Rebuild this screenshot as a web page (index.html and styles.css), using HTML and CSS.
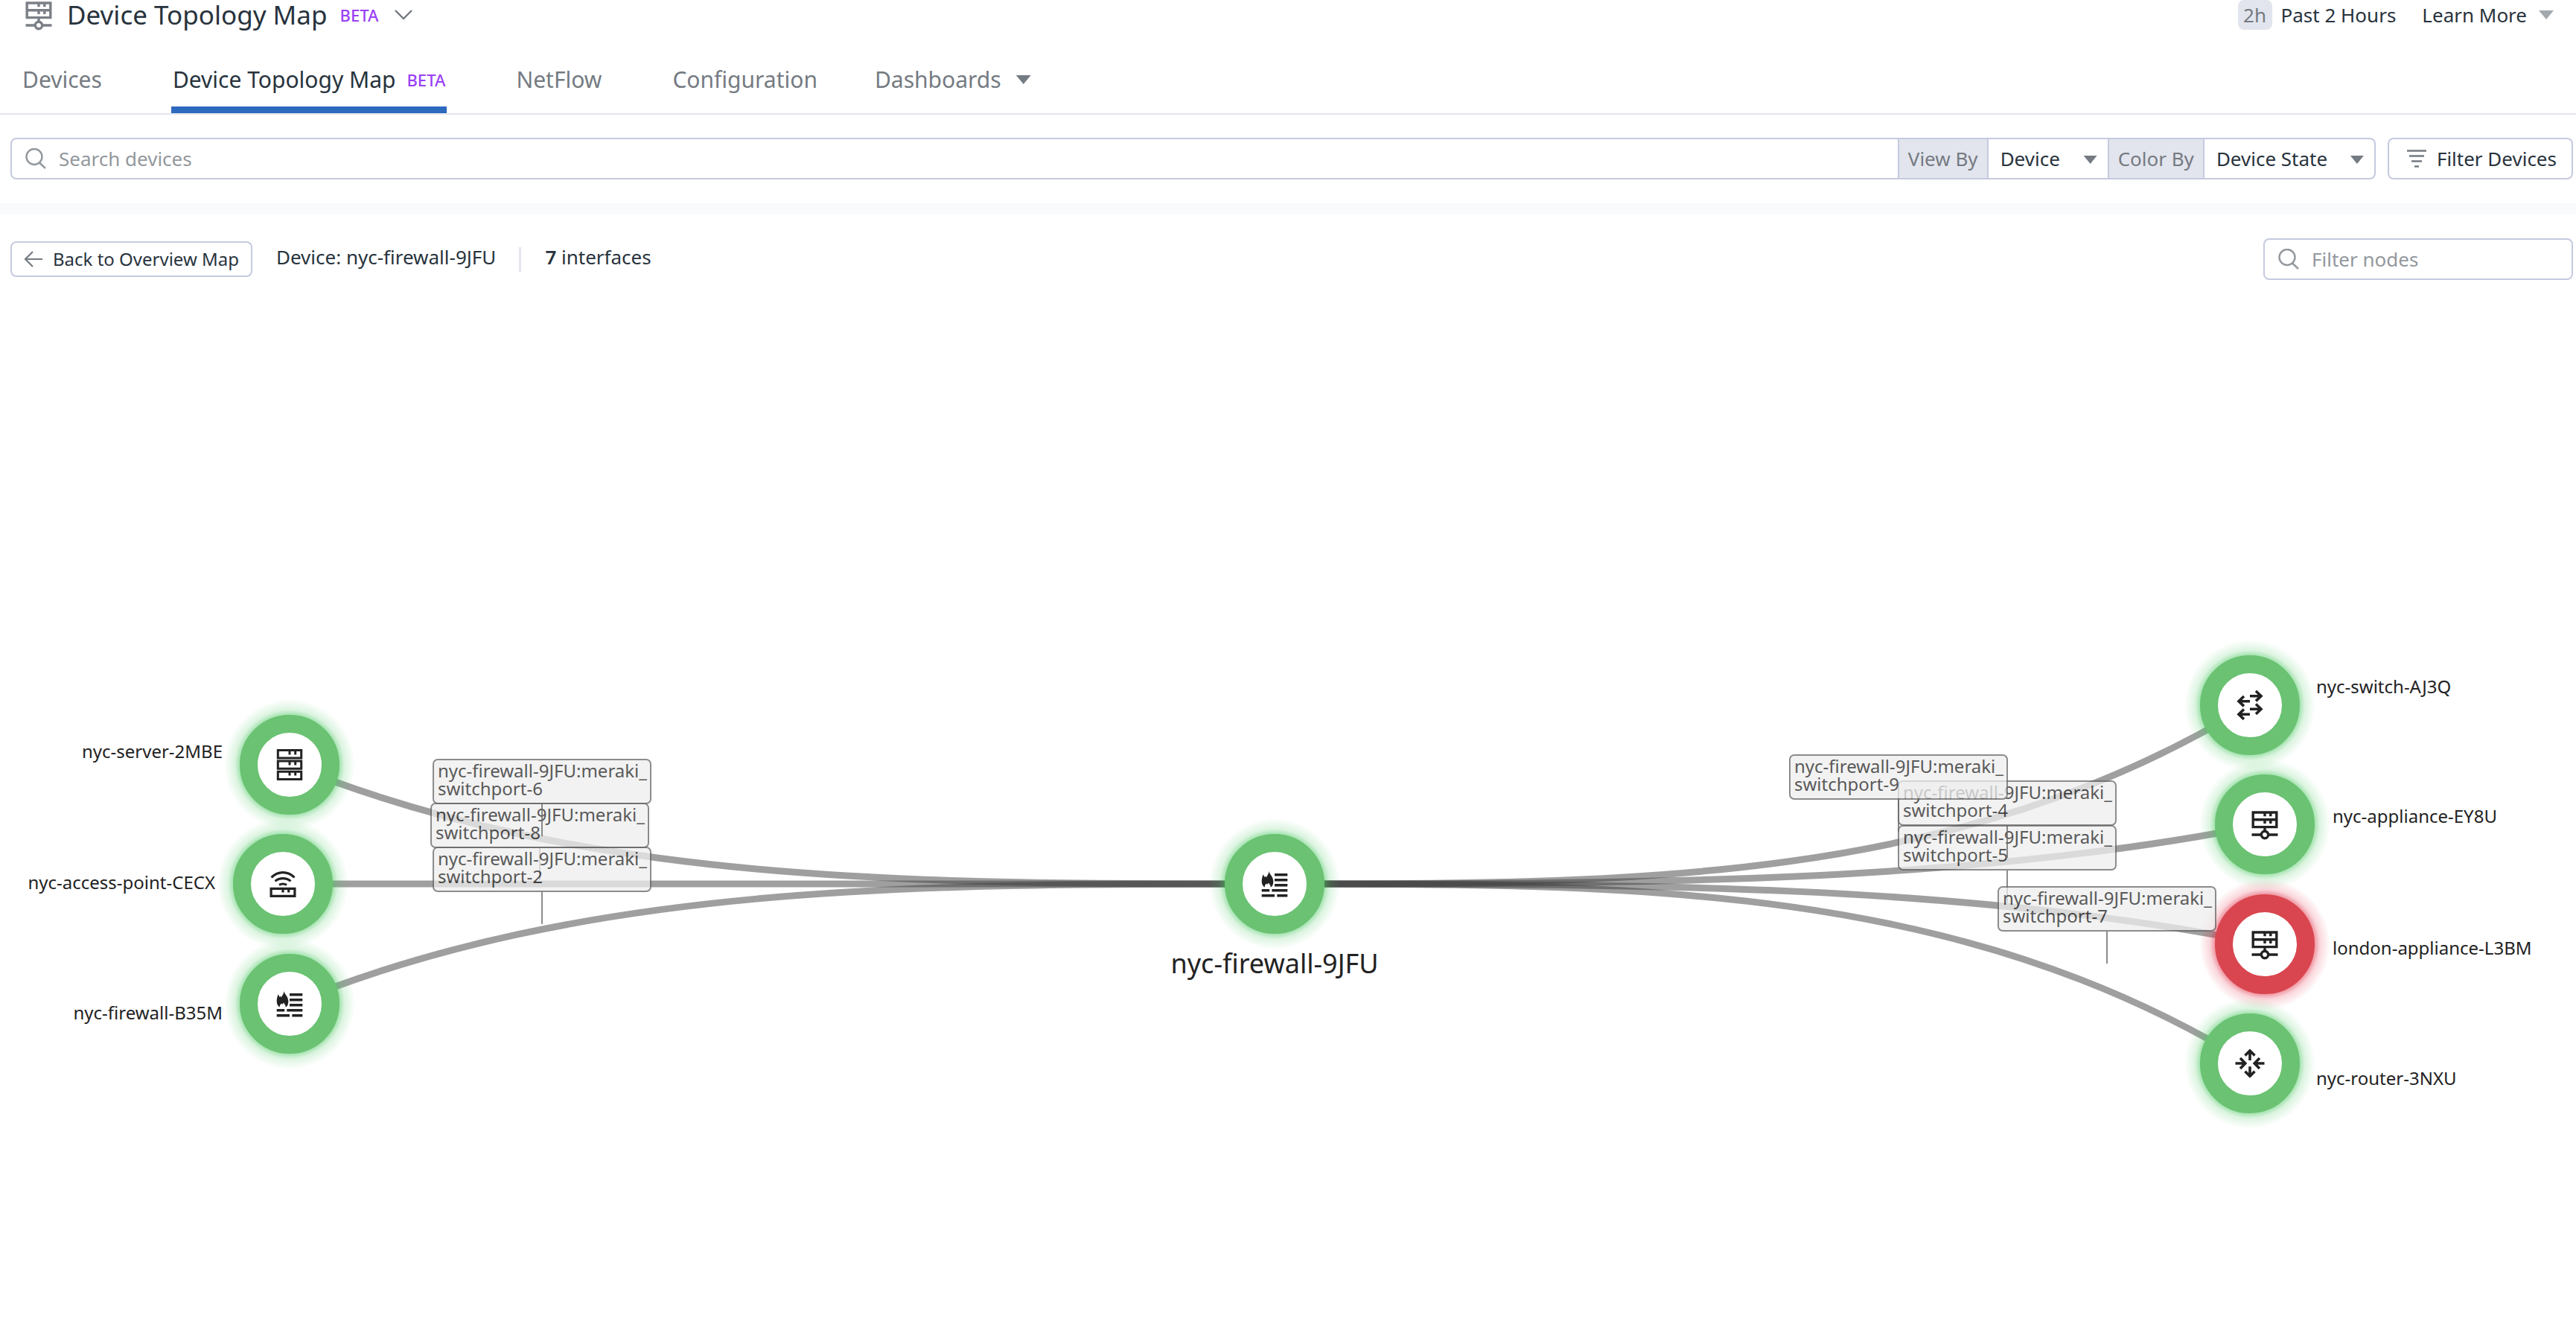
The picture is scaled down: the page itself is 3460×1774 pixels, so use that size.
FILE: index.html
```html
<!DOCTYPE html>
<html lang="en">
<head>
<meta charset="utf-8">
<title>Device Topology Map</title>
<link rel="stylesheet" href="styles.css">
</head>
<body>
<svg class="defs" aria-hidden="true">
  <symbol id="appliance" viewBox="-22 -22 44 44">
    <g fill="none" stroke="currentColor" stroke-width="3.4">
      <path d="M-15.8-16h31.6v19.6h-31.6zM-15.8-6.3h31.6"/>
      <path d="M0-16v5.2M7.8-16v5.2M0-6.3v5.2M7.8-6.3v5.2M0 3.6v5M-17.5 14h12M5.5 14h12"/>
      <circle cx="0" cy="14" r="4.7"/>
    </g>
  </symbol>
  <symbol id="server" viewBox="-22 -22 44 44">
    <g fill="none" stroke="currentColor" stroke-width="3">
      <path d="M-15.7-19.4h31.4v10.3h-31.4zM-15.7-5.1h31.4v10.3h-31.4zM-15.7 9.2h31.4v10.3h-31.4z"/>
      <path d="M0-19v5.4M7.7-19v5.4M0-5v5.4M7.7-5v5.4M0 9v5.4M7.7 9v5.4"/>
    </g>
  </symbol>
  <symbol id="access-point" viewBox="-22 -22 44 44">
    <g fill="none" stroke="currentColor" stroke-width="3.2">
      <path d="M-15.9 6.3h31.8v10.1h-31.8zM0 6v5.4M7.7 6v5.4"/>
      <path d="M-15.5-8.7Q-8.5-15.4 0-15.4T15.5-8.7M-10.4-3.6Q-6-7.3 0-7.3T10.4-3.6M-5 1.4Q-2.5 0 0 0T5 1.4"/>
    </g>
  </symbol>
  <symbol id="firewall" viewBox="-22 -22 44 44">
    <path fill="currentColor" d="M-7.5-17C-7-13-2.8-10.500-2.300-6.500L-1.700-4C-1.700 0-2.500 3.500-5.500 4.600C-5 1.500-7 .5-8.200-1.500L-9.800 1L-10.800-.6C-13 1-13.600 2.500-13 4.600C-15.500 3.500-17.300.5-17.300-3C-17.300-7-16.600-9-15.500-12.500C-14.500-11.800-14-10.500-13.700-9L-12.200-10.500L-11.400-8.500C-9.800-11-8-13.500-7.500-17z"/>
    <path stroke="currentColor" stroke-width="3.5" d="M0-12.300h17.300M0-5.300h17.300M0 1.700h17.300M-17.300 8.700h10.500M-3.700 8.700h21M-17.300 15.700h17.300M3.300 15.700h14"/>
  </symbol>
  <symbol id="switch" viewBox="-22 -22 44 44">
    <path fill="none" stroke="currentColor" stroke-width="3.6" d="M0-12.300h14.500M8-19l7 6.700l-7 6.700M0-5.300h-14.500M-8-12l-7 6.700l7 6.700M0 5.200h14.500M8-1.500l7 6.700l-7 6.700M0 12.200h-14.500M-8 5.500l-7 6.700l7 6.700"/>
  </symbol>
  <symbol id="router" viewBox="-22 -22 44 44">
    <path fill="none" stroke="currentColor" stroke-width="3.6" d="M0-4v-13M-6.500-10.500L0-17l6.500 6.500M0 4.300v13M-6.500 10.800L0 17.300l6.500-6.500M-19.500 0h13M-13-7l6.800 7l-6.800 7M19.500 0h-13M13-7l-6.800 7l6.800 7"/>
  </symbol>
  <symbol id="search" viewBox="0 0 28 28">
    <g fill="none" stroke="currentColor" stroke-width="2.4"><circle cx="12" cy="11.500" r="10.500"/><path d="M19 19.500l8 7.500"/></g>
  </symbol>
</svg>

<header class="page-head">
  <svg class="head-icon"><use href="#appliance"/></svg>
  <h1 class="title">Device Topology Map</h1>
  <span class="beta">BETA</span>
  <button class="plain chevron" aria-label="Switch page"><svg width="24" height="14" viewBox="0 0 24 14"><path d="M1 1l11 11l11-11" fill="none" stroke="currentColor" stroke-width="2.400"/></svg></button>
  <button class="plain time"><span class="badge">2h</span>Past 2 Hours</button>
  <button class="plain learn">Learn More<span class="caret pale"></span></button>
</header>

<nav class="tabs">
  <a class="tab" href="#devices">Devices</a>
  <a class="tab active" href="#map" aria-current="page">Device Topology Map<span class="beta">BETA</span></a>
  <a class="tab" href="#netflow">NetFlow</a>
  <a class="tab" href="#configuration">Configuration</a>
  <button class="plain tab menu">Dashboards<span class="caret"></span></button>
</nav>

<section class="search-row">
  <div class="group">
    <label class="search"><svg class="search-icon"><use href="#search"/></svg><input type="search" placeholder="Search devices" aria-label="Search devices"></label>
    <label class="group-label" for="view-by">View By</label>
    <div class="pick"><select id="view-by"><option>Device</option></select><span class="caret"></span></div>
    <label class="group-label" for="color-by">Color By</label>
    <div class="pick wide"><select id="color-by"><option>Device State</option></select><span class="caret"></span></div>
  </div>
  <button class="filter-button"><svg width="26" height="24" viewBox="0 0 26 24"><path d="M0 1.500h26M3 8.500h20M6 15.500h14M10 22.500h6" stroke="currentColor" stroke-width="2.600"/></svg>Filter Devices</button>
</section>

<main class="panel">
  <div class="toolbar">
    <button class="back"><svg width="26" height="22" viewBox="0 0 26 22"><path d="M25 11H2M12 1L2 11l10 10" fill="none" stroke="currentColor" stroke-width="2.200"/></svg>Back to Overview Map</button>
    <p class="info">Device: nyc-firewall-9JFU</p>
    <span class="rule"></span>
    <p class="info"><strong>7</strong> interfaces</p>
    <label class="search nodes"><svg class="search-icon"><use href="#search"/></svg><input type="search" placeholder="Filter nodes" aria-label="Filter nodes"></label>
  </div>

  <svg class="map" viewBox="0 394 3460 1380" role="img" aria-label="Interfaces of nyc-firewall-9JFU">
    <defs>
      <radialGradient id="glow-ok"><stop offset=".74" stop-color="#3fc457" stop-opacity=".55"/><stop offset=".84" stop-color="#3fc457" stop-opacity=".18"/><stop offset="1" stop-color="#3fc457" stop-opacity="0"/></radialGradient>
      <radialGradient id="glow-alert"><stop offset=".74" stop-color="#e0203a" stop-opacity=".55"/><stop offset=".84" stop-color="#e0203a" stop-opacity=".18"/><stop offset="1" stop-color="#e0203a" stop-opacity="0"/></radialGradient>
    </defs>

    <g class="links">
      <path d="M1712 1187C1223 1187 786 1187 390 1027"/>
      <path d="M1712 1187H380"/>
      <path d="M1712 1187C1223 1187 786 1187 390 1348"/>
      <path d="M1712 1187C2197 1187 2629 1187 3022 947"/>
      <path d="M1712 1187C2204 1187 2643 1187 3042 1107"/>
      <path d="M1712 1187C2204 1187 2643 1187 3042 1268"/>
      <path d="M1712 1187C2197 1187 2629 1187 3022 1428"/>
    </g>

    <g class="node ok" transform="translate(389 1027)"><circle class="glow" r="88"/><circle class="ring" r="55"/><use href="#server" x="-22" y="-22" width="44" height="44"/></g>
    <g class="node ok" transform="translate(380 1187)"><circle class="glow" r="88"/><circle class="ring" r="55"/><use href="#access-point" x="-22" y="-22" width="44" height="44"/></g>
    <g class="node ok" transform="translate(389 1348)"><circle class="glow" r="88"/><circle class="ring" r="55"/><use href="#firewall" x="-22" y="-22" width="44" height="44"/></g>
    <g class="node ok" transform="translate(1712 1187)"><circle class="glow" r="88"/><circle class="ring" r="55"/><use href="#firewall" x="-22" y="-22" width="44" height="44"/></g>
    <g class="node ok" transform="translate(3022 947)"><circle class="glow" r="88"/><circle class="ring" r="55"/><use href="#switch" x="-22" y="-22" width="44" height="44"/></g>
    <g class="node ok" transform="translate(3042 1107)"><circle class="glow" r="88"/><circle class="ring" r="55"/><use href="#appliance" x="-22" y="-22" width="44" height="44"/></g>
    <g class="node alert" transform="translate(3042 1268)"><circle class="glow" r="88"/><circle class="ring" r="55"/><use href="#appliance" x="-22" y="-22" width="44" height="44"/></g>
    <g class="node ok" transform="translate(3022 1428)"><circle class="glow" r="88"/><circle class="ring" r="55"/><use href="#router" x="-22" y="-22" width="44" height="44"/></g>

    <g class="name left">
      <text x="299" y="1018">nyc-server-2MBE</text>
      <text x="289" y="1194">nyc-access-point-CECX</text>
      <text x="299" y="1369">nyc-firewall-B35M</text>
    </g>
    <g class="name">
      <text x="3111" y="931">nyc-switch-AJ3Q</text>
      <text x="3133" y="1105">nyc-appliance-EY8U</text>
      <text x="3133" y="1282">london-appliance-L3BM</text>
      <text x="3111" y="1457">nyc-router-3NXU</text>
    </g>
    <text class="name root" x="1712" y="1307">nyc-firewall-9JFU</text>

    <g class="tag" transform="translate(579 1079)"><path d="M146 59v44"/><rect width="292" height="59" rx="6"/><text x="6" y="24">nyc-firewall-9JFU:meraki_<tspan x="6" y="48">switchport-8</tspan></text></g>
    <g class="tag" transform="translate(582 1020)"><path d="M146 59v44"/><rect width="292" height="59" rx="6"/><text x="6" y="24">nyc-firewall-9JFU:meraki_<tspan x="6" y="48">switchport-6</tspan></text></g>
    <g class="tag" transform="translate(582 1138)"><path d="M146 59v44"/><rect width="292" height="59" rx="6"/><text x="6" y="24">nyc-firewall-9JFU:meraki_<tspan x="6" y="48">switchport-2</tspan></text></g>
    <g class="tag" transform="translate(2550 1109)"><path d="M146 59v44"/><rect width="292" height="59" rx="6"/><text x="6" y="24">nyc-firewall-9JFU:meraki_<tspan x="6" y="48">switchport-5</tspan></text></g>
    <g class="tag" transform="translate(2550 1049)"><path d="M146 59v44"/><rect width="292" height="59" rx="6"/><text x="6" y="24">nyc-firewall-9JFU:meraki_<tspan x="6" y="48">switchport-4</tspan></text></g>
    <g class="tag" transform="translate(2404 1014)"><path d="M146 59v44"/><rect width="292" height="59" rx="6"/><text x="6" y="24">nyc-firewall-9JFU:meraki_<tspan x="6" y="48">switchport-9</tspan></text></g>
    <g class="tag" transform="translate(2684 1191)"><path d="M146 59v44"/><rect width="292" height="59" rx="6"/><text x="6" y="24">nyc-firewall-9JFU:meraki_<tspan x="6" y="48">switchport-7</tspan></text></g>
  </svg>
</main>
</body>
</html>
```
FILE: styles.css
```css
* { box-sizing: border-box; }

body {
  margin: 0;
  background: #fff;
  color: #28333d;
  font: 26px/40px "Noto Sans", sans-serif;
}

.defs { position: absolute; width: 0; height: 0; }

button, input, select { font: inherit; color: inherit; margin: 0; }
svg { flex: none; }

.plain {
  display: flex;
  align-items: center;
  padding: 0;
  border: 0;
  background: none;
}

.caret {
  width: 20px;
  height: 12px;
  background: #757b82;
  clip-path: polygon(0 0, 100% 0, 50% 100%);
}
.caret.pale { background: #a3a8ad; }

.beta { color: #9a40f5; font-size: 22px; font-weight: 500; }

.page-head { display: flex; align-items: center; height: 40px; padding: 0 30px 0 29px; }
.head-icon { width: 46px; height: 44px; color: #7b8087; }
.title { margin: 0 17px 0 15px; font-size: 35px; font-weight: 400; white-space: nowrap; }
.chevron { margin-left: 22px; color: #737980; }
.time { margin-left: auto; }
.badge {
  width: 46px;
  margin-right: 12px;
  border-radius: 8px;
  background: #e2e5ed;
  color: #757a82;
  text-align: center;
}
.learn { margin-left: 35px; }
.learn .caret { margin-left: 16px; }

.tabs {
  display: flex;
  height: 92px;
  margin-top: 22px;
  padding-left: 28px;
  border-bottom: 2px solid #e4e6ee;
}
.tab {
  display: flex;
  align-items: center;
  height: 90px;
  padding: 0 2px;
  color: #757b82;
  font-size: 30px;
  text-decoration: none;
}
.tab + .tab { margin-left: 91px; }
.tab.active { color: #28333d; box-shadow: inset 0 -9px #2d69be; }
.tab .beta { margin-left: 15px; }
.tab + .tab.menu { margin-left: 73px; }
.menu .caret { margin-left: 20px; }

.search-row {
  display: flex;
  gap: 16px;
  padding: 31px 4px 32px 14px;
  border-bottom: 15px solid #f9fafc;
}
.group {
  display: flex;
  flex: 1;
  height: 56px;
  border: 2px solid #c5cadf;
  border-radius: 8px;
}
.search { display: flex; flex: 1; align-items: center; gap: 17px; min-width: 0; padding-left: 18px; }
.search-icon { width: 28px; height: 28px; color: #93989d; }
.search input {
  flex: 1;
  min-width: 0;
  padding: 0;
  border: 0;
  outline: 0;
  background: none;
}
.search input::placeholder { color: #93989d; opacity: 1; }
.group-label {
  padding: 6px 12px;
  border: solid #c5cadf;
  border-width: 0 2px;
  background: #e2e5ed;
  color: #757a82;
  white-space: nowrap;
}
.pick { position: relative; width: 160px; }
.pick.wide { width: 228px; }
.pick select {
  width: 100%;
  height: 52px;
  padding: 0 0 0 16px;
  border: 0;
  background: none;
  appearance: none;
}
.pick .caret { position: absolute; top: 22px; right: 14px; width: 18px; height: 11px; pointer-events: none; }

.filter-button, .back {
  display: flex;
  align-items: center;
  border: 2px solid #c5cadf;
  border-radius: 8px;
  background: #fff;
  white-space: nowrap;
}
.filter-button { gap: 14px; padding: 0 20px 0 24px; }
.back { gap: 13px; height: 48px; padding: 0 16px; font-size: 24px; }
.filter-button svg, .back svg { color: #757b82; }

.toolbar { display: flex; align-items: center; height: 106px; padding: 14px 4px 0 14px; }
.info { margin: 0 0 7px 32px; }
.rule { width: 3px; height: 33px; margin-left: 31px; background: #e4e6ee; }
.toolbar strong { font-weight: 600; }
.toolbar .nodes {
  flex: 0 0 416px;
  height: 56px;
  margin-left: auto;
  border: 2px solid #c5cadf;
  border-radius: 8px;
}

.map { display: block; width: 100%; height: auto; }
.links { fill: none; stroke: #404040; stroke-width: 9; }
.links path { stroke-opacity: .5; }
.node { color: #222; }
.ring { fill: #fff; stroke-width: 24; }
.ok .ring { stroke: #6ac272; }
.ok .glow { fill: url(#glow-ok); }
.alert .ring { stroke: #d9464f; }
.alert .glow { fill: url(#glow-alert); }
.name { fill: #222; font-size: 24px; }
.left { text-anchor: end; }
.root { font-size: 36px; text-anchor: middle; }
.tag { fill: #222; font-size: 24px; opacity: .75; }
.tag rect { fill: #eee; stroke: #666; stroke-width: 2; }
.tag path { fill: none; stroke: #666; stroke-width: 2; }
```
